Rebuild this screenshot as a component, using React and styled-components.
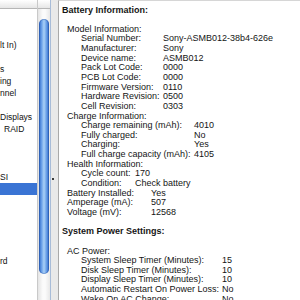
import React from "react"
import styled, { createGlobalStyle } from "styled-components"

const GlobalStyle = createGlobalStyle`
  html, body {
    margin: 0;
    padding: 0;
    background: #ffffff;
  }
  body {
    font-family: "Liberation Sans", Arial, sans-serif;
  }
`

const StyledWindow = styled.div`
  display: flex;
  width: 300px;
  height: 300px;
  overflow: hidden;
  background: #ffffff;
`

const StyledSidebar = styled.div`
  display: flex;
  width: 50px;
  flex-shrink: 0;
`

const StyledListColumn = styled.div`
  display: flex;
  flex-direction: column;
  width: 38px;
  border-right: 1px solid #c9c9c9;
  box-sizing: border-box;
`

const StyledHeader = styled.div`
  height: 8px;
  flex-shrink: 0;
  background: linear-gradient(#ffffff, #e6e6e6);
  border-bottom: 1px solid #b6b6b6;
`

const StyledList = styled.div`
  flex: 1;
  overflow: hidden;
  padding-top: 6px;
`

const StyledItem = styled.div`
  height: 12px;
  line-height: 12px;
  font-size: 8.5px;
  white-space: nowrap;
  color: #111111;
  padding-left: ${(p) => p.shift || 0}px;
  background: ${(p) => (p.selected ? "#3a74d4" : "transparent")};
`

const StyledScrollColumn = styled.div`
  display: flex;
  flex-direction: column;
  width: 12px;
`

const StyledTrack = styled.div`
  flex: 1;
  padding: 10px 1px 0 1px;
  background: linear-gradient(to right, #e4e4e4, #fbfbfb 40%, #fbfbfb 60%, #e8e8e8);
`

const StyledThumb = styled.div`
  height: 255px;
  border-radius: 5px;
  background: linear-gradient(
    to right,
    #2f66c2 0%,
    #5b93e3 20%,
    #a9d0f7 50%,
    #5b93e3 80%,
    #2f66c2 100%
  );
  box-shadow: inset 0 0 0 1px rgba(30, 70, 150, 0.35);
`

const StyledSplitter = styled.div`
  display: flex;
  flex-direction: column;
  width: 6px;
  flex-shrink: 0;
  padding-top: 178px;
  padding-left: 1px;
  background: #e9e9e9;
  border-left: 1px solid #a8bcd8;
`

const StyledDimple = styled.div`
  width: 2px;
  height: 2px;
  background: #3a3a3a;
`

const StyledContent = styled.div`
  flex: 1;
  border-left: 1px solid #a9a9a9;
  border-top: 1px solid #d6d6d6;
  padding-top: 4.5px;
  padding-left: 3px;
  font-size: 9px;
  line-height: 9.65px;
  color: #151515;
  white-space: nowrap;
`

const StyledHeading = styled.div`
  font-weight: bold;
  height: 9.65px;
  margin-bottom: ${(p) => (p.space ? "9.65px" : "0")};
`

const StyledBlank = styled.div`
  height: 9.65px;
`

const StyledRow = styled.div`
  display: flex;
  height: 9.65px;
  padding-left: ${(p) => p.indent}px;
`

const StyledLabel = styled.span`
  display: inline-block;
  width: ${(p) => p.width}px;
  flex-shrink: 0;
`

const sidebarItems = [
  { text: "" },
  { text: "" },
  { text: "lt In)" },
  { text: "" },
  { text: "s" },
  { text: "ing" },
  { text: "nnel" },
  { text: "" },
  { text: "Displays" },
  { text: "RAID", shift: 4 },
  { text: "" },
  { text: "" },
  { text: "" },
  { text: "SI" },
  { text: "", selected: true },
  { text: "" },
  { text: "" },
  { text: "" },
  { text: "" },
  { text: "" },
  { text: "rd" },
]

const groups = [
  {
    title: "Model Information:",
    width: 82,
    rows: [
      ["Serial Number:", "Sony-ASMB012-38b4-626e"],
      ["Manufacturer:", "Sony"],
      ["Device name:", "ASMB012"],
      ["Pack Lot Code:", "0000"],
      ["PCB Lot Code:", "0000"],
      ["Firmware Version:", "0110"],
      ["Hardware Revision:", "0500"],
      ["Cell Revision:", "0303"],
    ],
  },
  {
    title: "Charge Information:",
    width: 113,
    rows: [
      ["Charge remaining (mAh):", "4010"],
      ["Fully charged:", "No"],
      ["Charging:", "Yes"],
      ["Full charge capacity (mAh):", "4105"],
    ],
  },
  {
    title: "Health Information:",
    width: 54,
    rows: [
      ["Cycle count:", "170"],
      ["Condition:", "Check battery"],
    ],
  },
]

const batteryRows = [
  ["Battery Installed:", "Yes"],
  ["Amperage (mA):", "507"],
  ["Voltage (mV):", "12568"],
]

const powerRows = [
  ["System Sleep Timer (Minutes):", "15"],
  ["Disk Sleep Timer (Minutes):", "10"],
  ["Display Sleep Timer (Minutes):", "10"],
  ["Automatic Restart On Power Loss:", "No"],
  ["Wake On AC Change:", "No"],
]

const App = () => {
  return (
    <StyledWindow>
      <GlobalStyle />
      <StyledSidebar>
        <StyledListColumn>
          <StyledHeader />
          <StyledList>
            {sidebarItems.map((item, i) => (
              <StyledItem key={i} shift={item.shift} selected={item.selected}>
                {item.text}
              </StyledItem>
            ))}
          </StyledList>
        </StyledListColumn>
        <StyledScrollColumn>
          <StyledHeader />
          <StyledTrack>
            <StyledThumb />
          </StyledTrack>
        </StyledScrollColumn>
      </StyledSidebar>
      <StyledSplitter>
        <StyledDimple />
      </StyledSplitter>
      <StyledContent>
        <StyledHeading space>Battery Information:</StyledHeading>
        {groups.map((group) => (
          <React.Fragment key={group.title}>
            <StyledRow indent={5}>{group.title}</StyledRow>
            {group.rows.map(([label, value]) => (
              <StyledRow key={label} indent={19}>
                <StyledLabel width={group.width}>{label}</StyledLabel>
                <span>{value}</span>
              </StyledRow>
            ))}
          </React.Fragment>
        ))}
        {batteryRows.map(([label, value]) => (
          <StyledRow key={label} indent={5}>
            <StyledLabel width={84}>{label}</StyledLabel>
            <span>{value}</span>
          </StyledRow>
        ))}
        <StyledBlank />
        <StyledHeading space>System Power Settings:</StyledHeading>
        <StyledRow indent={5}>AC Power:</StyledRow>
        {powerRows.map(([label, value]) => (
          <StyledRow key={label} indent={19}>
            <StyledLabel width={141}>{label}</StyledLabel>
            <span>{value}</span>
          </StyledRow>
        ))}
      </StyledContent>
    </StyledWindow>
  )
}

export default App
